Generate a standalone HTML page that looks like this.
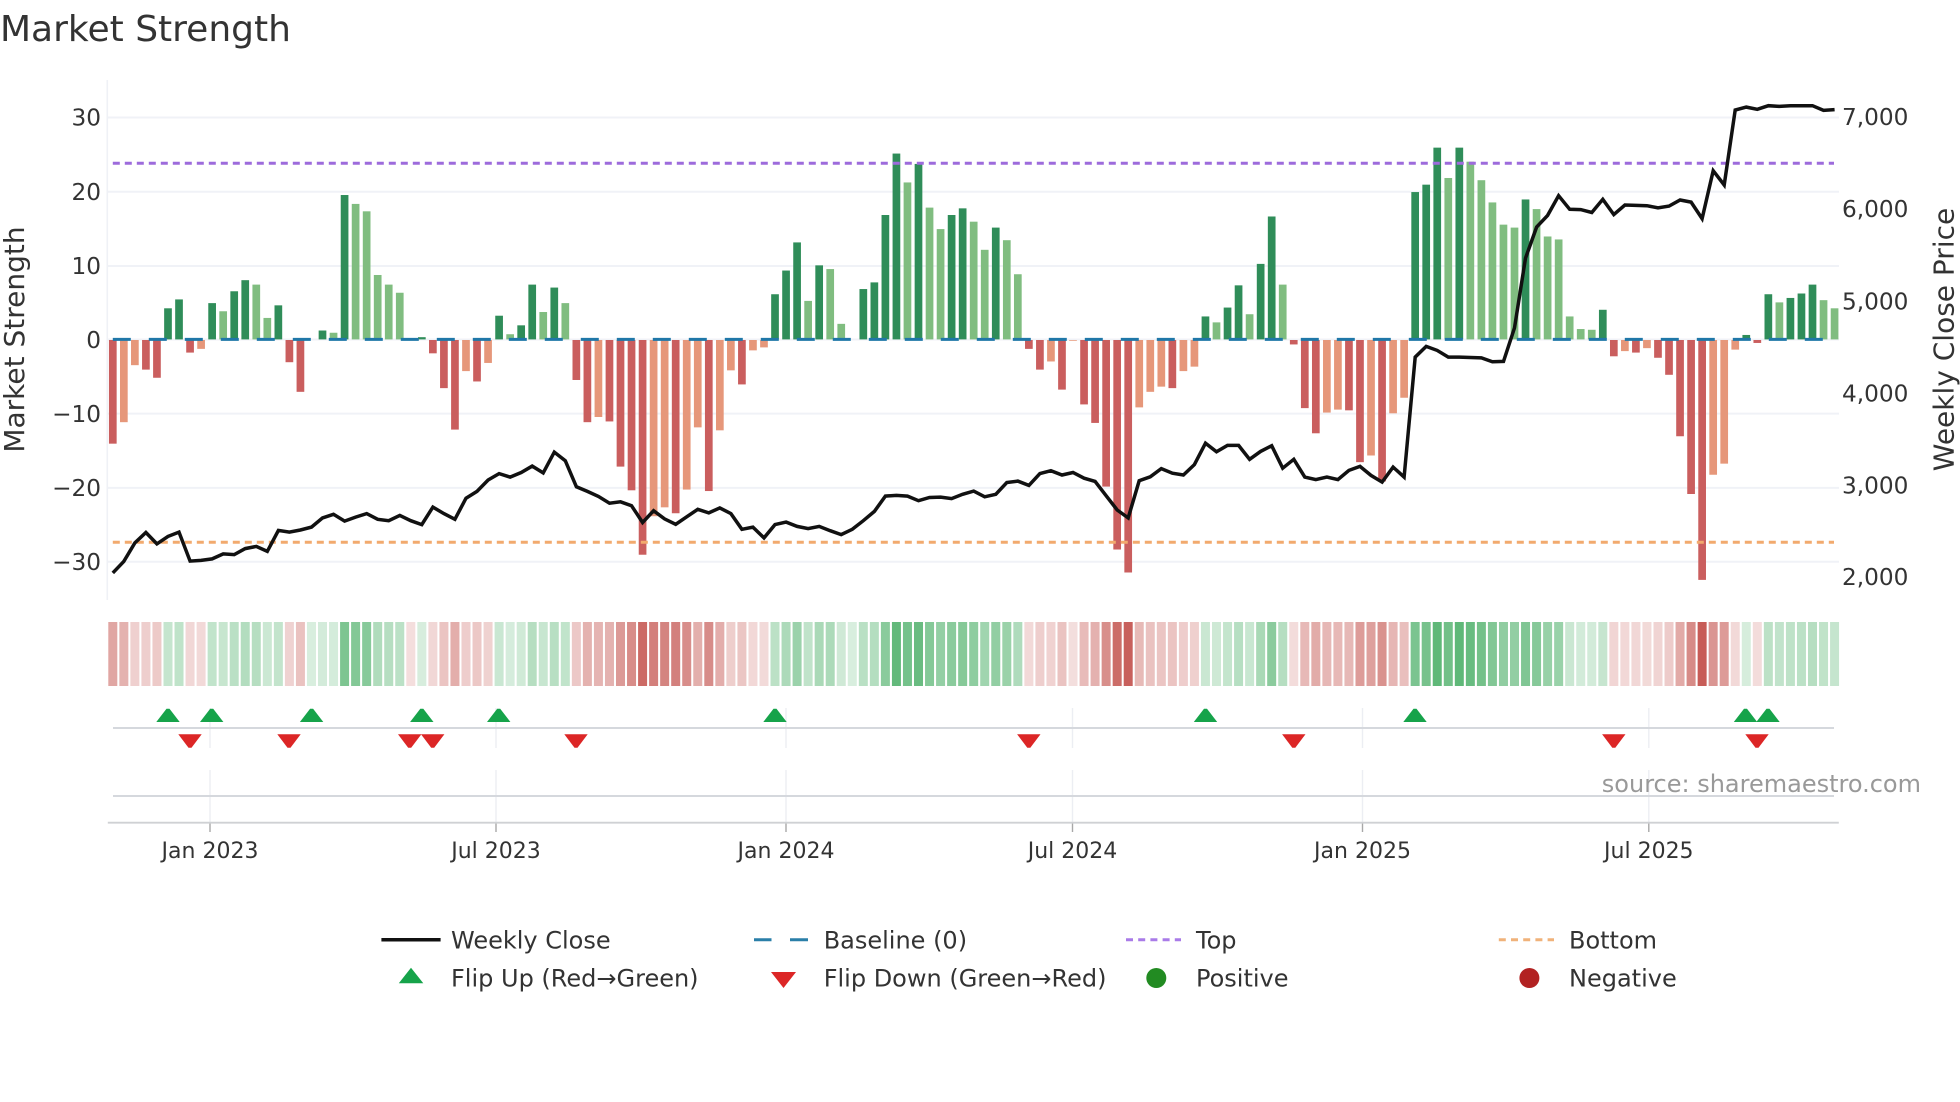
<!DOCTYPE html>
<html lang="en">
<head>
<meta charset="utf-8">
<title>Market Strength</title>
<style>
html,body{margin:0;padding:0;background:#fff;width:1960px;height:1102px;overflow:hidden}
svg{display:block;position:absolute;left:0;top:0}
text{font-family:"DejaVu Sans","Liberation Sans",sans-serif;fill:#333}
</style>
</head>
<body>
<svg id="c" xmlns="http://www.w3.org/2000/svg" width="1960" height="1102" viewBox="0 0 1960 1102">
<rect width="1960" height="1102" fill="#fff"/>
<g id="grid"></g>
<g id="heat"></g>
<g id="bars"></g>
<g fill="none" stroke-width="3">
<path d="M112.8 163.2H1834" stroke="#9d6bdc" stroke-dasharray="7 5"/>
<path d="M112.8 542.2H1834" stroke="#f2aa6e" stroke-dasharray="7 5"/>
<path d="M112.8 339.4H1834" stroke="#1f77a8" stroke-dasharray="18 18"/>
</g>
<path id="line" fill="none" stroke="#111" stroke-width="3.5" stroke-linejoin="miter"/>
<g id="flips"></g>

<text x="0" y="41" font-size="36">Market Strength</text>

<g font-size="23.2" text-anchor="end">
<text x="101" y="125.6">30</text>
<text x="101" y="200">20</text>
<text x="101" y="274.2">10</text>
<text x="101" y="347.8">0</text>
<text x="101" y="422">−10</text>
<text x="101" y="496.2">−20</text>
<text x="101" y="570.2">−30</text>
</g>
<g font-size="23.2">
<text x="1842" y="124.8">7,000</text>
<text x="1842" y="217.2">6,000</text>
<text x="1842" y="309.6">5,000</text>
<text x="1842" y="401.4">4,000</text>
<text x="1842" y="493.6">3,000</text>
<text x="1842" y="585.2">2,000</text>
</g>
<text transform="translate(24 339.5) rotate(-90)" font-size="28" text-anchor="middle">Market Strength</text>
<text transform="translate(1953.5 339.5) rotate(-90)" font-size="28" text-anchor="middle">Weekly Close Price</text>

<g font-size="22" text-anchor="middle">
<text x="210" y="858">Jan 2023</text>
<text x="496" y="858">Jul 2023</text>
<text x="786" y="858">Jan 2024</text>
<text x="1072.5" y="858">Jul 2024</text>
<text x="1362.5" y="858">Jan 2025</text>
<text x="1648.8" y="858">Jul 2025</text>
</g>
<text x="1921" y="792" font-size="24" text-anchor="end" style="fill:#999">source: sharemaestro.com</text>

<g font-size="24">
<text x="451" y="948.3">Weekly Close</text>
<text x="823.7" y="948.3">Baseline (0)</text>
<text x="1196" y="948.3">Top</text>
<text x="1569" y="948.3">Bottom</text>
<text x="451" y="986.6">Flip Up (Red→Green)</text>
<text x="823.7" y="986.6">Flip Down (Green→Red)</text>
<text x="1196" y="986.6">Positive</text>
<text x="1569" y="986.6">Negative</text>
</g>
<path d="M381.4 939.7H440.6" stroke="#111" stroke-width="3.5" fill="none"/>
<path d="M754 939.7H771.5M790 939.7H808" stroke="#2a7fa8" stroke-width="3" fill="none"/>
<path d="M1126 939.7H1181" stroke="#a97be8" stroke-width="3" stroke-dasharray="7 5.2" fill="none"/>
<path d="M1498.8 939.7H1554" stroke="#f0b27a" stroke-width="3" stroke-dasharray="7 5.2" fill="none"/>
<path d="M411 967.7L423.3 983.3H398.8Z" fill="#16a34a"/>
<path d="M771 972H796L783.5 988Z" fill="#dc2626"/>
<circle cx="1156.3" cy="978" r="10" fill="#228b22"/>
<circle cx="1529.4" cy="978" r="10" fill="#b22222"/>
</svg>
<script>
var NS="http://www.w3.org/2000/svg";
function el(p,n,a){var e=document.createElementNS(NS,n);for(var k in a)e.setAttribute(k,a[k]);p.appendChild(e);return e}
var V=[-14,-11.1,-3.4,-4,-5.1,4.2,5.4,-1.7,-1.2,4.9,3.8,6.5,8,7.4,2.9,4.6,-3,-7,0,1.2,0.9,19.5,18.3,17.3,8.7,7.4,6.3,-0.05,0.3,-1.8,-6.5,-12.1,-4.2,-5.6,-3.1,3.2,0.7,1.9,7.4,3.7,7,4.9,-5.4,-11.1,-10.4,-11,-17.1,-20.3,-29,-23.8,-22.6,-23.4,-20.2,-11.8,-20.4,-12.2,-4.1,-6,-1.4,-1,6.1,9.3,13.1,5.2,10,9.5,2.1,0,6.8,7.7,16.8,25.1,21.2,23.7,17.8,14.9,16.8,17.7,15.9,12.1,15.1,13.4,8.8,-1.2,-4,-2.9,-6.7,-0.1,-8.7,-11.2,-19.8,-28.3,-31.4,-9.1,-7,-6.3,-6.5,-4.2,-3.6,3.1,2.3,4.3,7.3,3.4,10.2,16.6,7.4,-0.6,-9.2,-12.6,-9.8,-9.4,-9.5,-16.5,-15.6,-19.1,-9.9,-7.8,19.9,20.9,25.9,21.8,25.9,24,21.5,18.5,15.5,15.1,18.9,17.6,13.9,13.5,3.1,1.4,1.3,4,-2.2,-1.5,-1.7,-1.1,-2.4,-4.7,-13,-20.8,-32.4,-18.2,-16.7,-1.3,0.6,-0.4,6.1,5,5.6,6.2,7.4,5.3,4.2];
var L="2,1,1,2,2,2,2,2,1,2,1,2,2,1,1,2,2,2,1,2,1,2,1,1,1,1,1,2,2,2,2,2,1,2,1,2,1,2,2,1,2,1,2,2,1,2,2,2,2,1,1,2,1,1,2,1,1,2,1,1,2,2,2,1,2,1,1,1,2,2,2,2,1,2,1,1,2,2,1,1,2,1,1,2,2,1,2,1,2,2,2,2,2,1,1,1,2,1,1,2,1,2,2,1,2,2,1,2,2,2,1,1,2,2,1,2,1,1,2,2,2,1,2,1,1,1,1,1,2,1,1,1,1,1,1,2,2,1,2,1,2,2,2,2,2,1,1,1,2,2,2,1,2,2,2,1,1".split(",");
var P=[1436,1404,1352,1323,1355,1334,1322,1403,1401,1397,1383,1385,1368,1362,1376,1317,1322,1316,1308,1282,1272,1291,1280,1270,1286,1290,1275,1290,1301,1252,1270,1286,1227,1208,1176,1158,1168,1155,1137,1156,1098,1122,1195,1208,1222,1241,1237,1248,1295,1262,1285,1300,1279,1258,1268,1254,1270,1314,1308,1338,1301,1294,1306,1312,1306,1318,1329,1314,1290,1264,1221,1219,1221,1234,1225,1224,1228,1216,1207,1223,1216,1183,1179,1191,1158,1150,1162,1155,1171,1180,1220,1260,1282,1178,1167,1144,1157,1162,1133,1073,1097,1079,1079,1118,1096,1080,1143,1118,1168,1175,1168,1175,1149,1138,1163,1182,1140,1168,832,802,813,832,832,833,834,845,844,750,555,468,435,380,418,419,427,390,433,406,407,408,414,409,392,398,444,310,350,140,132,138,128,130,128,128,128,141,139];
var x0=112.8,dx=11.037,Z=339.4,U=7.404;
var g=document.getElementById("grid");
[117.5,191.8,266,339.5,413.6,487.9,561.8].forEach(function(y){el(g,"path",{d:"M108 "+y+"H1839",stroke:"#f0f2f7","stroke-width":2,fill:"none"})});
el(g,"path",{d:"M107.3 80V600",stroke:"#eff1f6","stroke-width":1.6,fill:"none"});
[210,496,786,1072.5,1362.5,1648.8].forEach(function(x){
 el(g,"path",{d:"M"+x+" 708V748M"+x+" 770V822",stroke:"#eceef3","stroke-width":1.4,fill:"none"});
 el(g,"path",{d:"M"+x+" 823V832",stroke:"#a8a8a8","stroke-width":1.4,fill:"none"});
});
el(g,"path",{d:"M113 728H1834M113 796H1834",stroke:"#d5d8dd","stroke-width":2,fill:"none"});
el(g,"path",{d:"M107.8 822.7H1838.8",stroke:"#cfd1d4","stroke-width":1.8,fill:"none"});
var b=document.getElementById("bars"),h=document.getElementById("heat"),d="";
V.forEach(function(v,i){
 var x=x0+dx*i,a=Math.abs(v)*U,c;
 if(v>=0)c=L[i]=="2"?"#2f8d59":"#80bd80";else c=L[i]=="2"?"#ca5e5e":"#e6977a";
 if(a>0.2)el(b,"rect",{x:(x-3.85).toFixed(2),y:(v>0?Z-a:Z+0.6).toFixed(2),width:7.7,height:a.toFixed(2),fill:c});
 var al=0.2+0.8*Math.min(Math.abs(v)/33,1),base=v>=0?[62,169,92]:[198,90,85];
 var col="rgb("+base.map(function(q){return Math.round(255-(255-q)*al)}).join(",")+")";
 el(h,"rect",{x:(x-4.5).toFixed(2),y:622,width:9,height:64,fill:col});
 d+=(i?"L":"M")+x.toFixed(1)+" "+(60+P[i]/2.8).toFixed(1);
});
document.getElementById("line").setAttribute("d",d);
var f=document.getElementById("flips");
[168,211.7,311.6,421.8,498.7,775,1205.5,1415,1745.5,1768].forEach(function(x){
 el(f,"path",{d:"M"+(x-11.7)+" 722L"+(x-1.5)+" 708.7H"+(x+1.5)+"L"+(x+11.7)+" 722Z",fill:"#16a34a"})});
[190,289,409.7,432.7,576,1028.8,1293.8,1613.8,1757].forEach(function(x){
 el(f,"path",{d:"M"+(x-11.7)+" 734.3H"+(x+11.7)+"L"+(x+1.5)+" 747.7H"+(x-1.5)+"Z",fill:"#dc2626"})});
</script>
</body>
</html>
